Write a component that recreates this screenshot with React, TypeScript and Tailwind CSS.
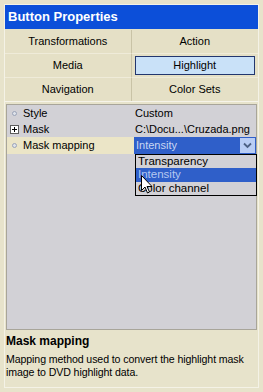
const font = { fontFamily: '"Liberation Sans", Tahoma, sans-serif' };

function TabButton({ label, active }: { label: string; active?: boolean }) {
  return (
    <div className="flex h-[23px] items-center justify-center px-[3px] py-[2px]">
      <div
        className={
          active
            ? 'flex h-full w-full items-center justify-center border border-[#22366e] bg-[#c9e1f8] text-black'
            : 'flex h-full w-full items-center justify-center text-black'
        }
      >
        {label}
      </div>
    </div>
  );
}

function Dot() {
  return (
    <span className="flex h-[9px] w-[9px] items-center justify-center">
      <span className="h-[5px] w-[5px] rounded-full border border-[#9aa3b8] bg-[#dfe3ea]" />
    </span>
  );
}

function Plus() {
  return (
    <span className="flex h-[9px] w-[9px] items-center justify-center border border-[#5c5c5c] bg-white">
      <svg width="7" height="7" viewBox="0 0 7 7">
        <path d="M1 3.5h5M3.5 1v5" stroke="#000" strokeWidth="1" />
      </svg>
    </span>
  );
}

export default function App() {
  return (
    <div className="h-[392px] w-[263px] bg-[#e7e3cb] p-[4px] text-[11px] text-black" style={font}>
      <div className="flex h-full flex-col border border-[#f4f2e6]">
        <div className="flex h-[24px] items-center bg-[#0c4fd9] px-[3px] text-[13px] font-bold text-white">
          Button Properties
        </div>
        <div className="grid grid-cols-2 border-b border-[#f6f4ea] bg-[#e5e0c6] pt-[1px]">
          <div className="border-r border-[#c9c3a6]"><TabButton label="Transformations" /></div>
          <TabButton label="Action" />
          <div className="border-r border-t border-[#c9c3a6] border-t-[#efebd9]"><TabButton label="Media" /></div>
          <div className="border-t border-[#efebd9]"><TabButton label="Highlight" active /></div>
          <div className="border-r border-t border-[#c9c3a6] border-t-[#efebd9]"><TabButton label="Navigation" /></div>
          <div className="border-t border-[#efebd9]"><TabButton label="Color Sets" /></div>
        </div>
        <div className="relative mx-[1px] mt-[2px] h-[226px] border border-[#a8a59a] bg-[#d2d1d6]">
          <div className="flex h-[16px] items-center">
            <div className="flex w-[127px] items-center gap-[4px] pl-[3px]"><Dot />Style</div>
            <div className="pl-[1px]">Custom</div>
          </div>
          <div className="flex h-[16px] items-center">
            <div className="flex w-[127px] items-center gap-[4px] pl-[3px]"><Plus />Mask</div>
            <div className="whitespace-nowrap pl-[1px]">C:\Docu...\Cruzada.png</div>
          </div>
          <div className="flex h-[17px] items-center">
            <div className="flex h-full w-[127px] items-center gap-[4px] bg-[#ebe5c7] pl-[3px]"><Dot />Mask mapping</div>
            <div className="flex h-full flex-1 items-center bg-[#2f5fc9] pl-[2px] pr-[1px] text-[#c9d6f2]">
              <span className="flex-1">Intensity</span>
              <span className="flex h-[15px] w-[15px] items-center justify-center bg-[#b9cdf5]">
                <svg width="9" height="7" viewBox="0 0 9 7">
                  <path d="M1 1.5l3.5 3.5 3.5-3.5" fill="none" stroke="#4d6185" strokeWidth="1.8" />
                </svg>
              </span>
            </div>
          </div>
          <div className="absolute left-[128px] top-[49px] w-[122px] border border-black bg-[#d2d1d6] text-[11.5px]">
            <div className="flex h-[13px] items-center pl-[2px]">Transparency</div>
            <div className="flex h-[14px] items-center bg-[#2f5fc9] pl-[2px] text-[#b5c8f0]">Intensity</div>
            <div className="flex h-[13px] items-center pl-[2px]">Color channel</div>
            <svg className="absolute left-[5px] top-[20px]" width="12" height="19" viewBox="0 0 12 19">
              <path d="M0.5 0.5v15l3.5-3.5 2.5 6 2-1-2.5-5.5h5z" fill="#fff" stroke="#000" strokeWidth="1" />
            </svg>
          </div>
        </div>
        <div className="px-[1px] pt-[2px]">
          <div className="text-[12px] font-bold">Mask mapping</div>
          <div className="mt-[3px] text-[10.6px] leading-[13px] tracking-[-0.1px]">
            Mapping method used to convert the highlight mask image to DVD highlight data.
          </div>
        </div>
      </div>
    </div>
  );
}
